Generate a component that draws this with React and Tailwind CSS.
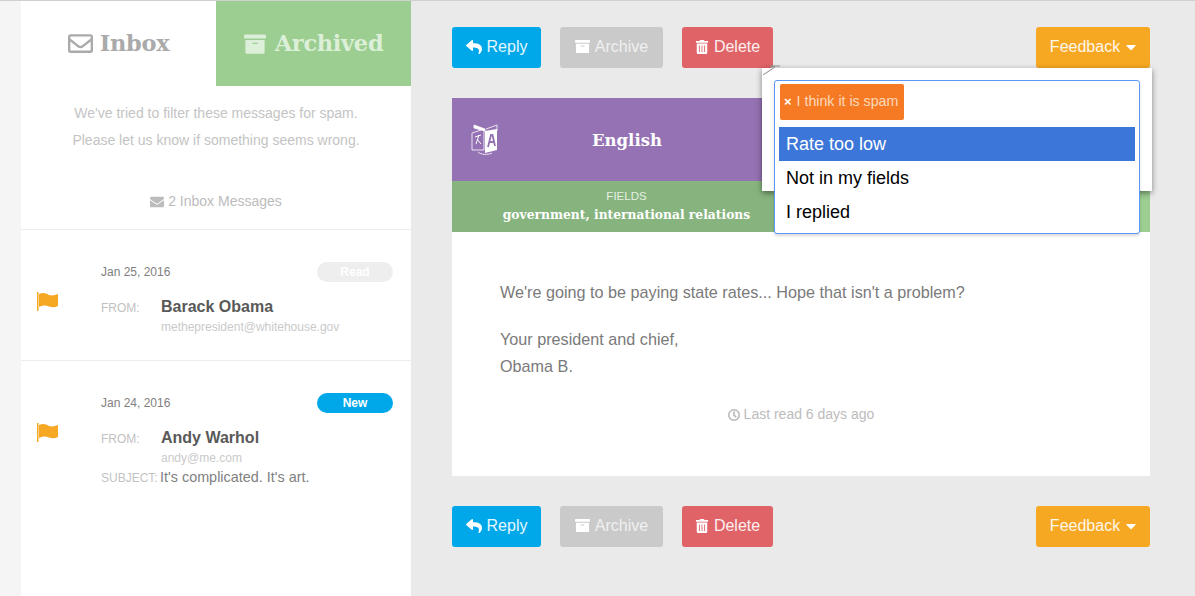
import { FaArchive, FaCaretDown, FaEnvelope, FaRegClock, FaRegEnvelope, FaReply, FaTrashAlt } from "react-icons/fa";

const sans = "font-['Liberation_Sans',Arial,sans-serif]";
const slab = "font-['DejaVu_Serif',serif]";

function TranslateIcon() {
  return (
    <svg width="30" height="32" viewBox="0 0 30 32" fill="none" stroke="#fff" strokeWidth="0.8">
      <path d="M1 9 L13 5 L13 26 L1 26 Z" />
      <path d="M3 1 L14 5 L14 7 L3 4 Z" fill="#fff" />
      <path d="M15 5 L26 1 L26 7" />
      <path d="M14 7 L26 5 L26 26 L14 29 Z" fill="#fff" stroke="none" />
      <path d="M17 23 L20 11 L21.5 11 L24 22 M18.5 18 L23 18" stroke="#9572b3" strokeWidth="1.8" />
      <path d="M4 13 L10 11 M8 11 L5 20 M6 15 L10 20" strokeWidth="1" />
      <path d="M7 28 C10 31 17 31 21 29" />
    </svg>
  );
}

function FlagIcon() {
  return (
    <svg className="mt-[30px] shrink-0" width="21" height="19" viewBox="0 0 21 19" fill="#f7a823">
      <rect x="0" y="0" width="1.5" height="19" />
      <path d="M2 2 C6 0 9 1 12 3 C15 4 18 3 21 2 L21 14 C18 15.5 15 15.5 12 14.5 C9 13 6 13 2 15 Z" />
    </svg>
  );
}

function ActionBar() {
  return (
    <div className="flex text-[16px] text-white/90">
      <button className="flex h-[41px] w-[89px] items-center justify-center gap-[5px] rounded-[3px] bg-[#00a8ea] pb-[2px]">
        <FaReply className="size-[16px] text-white" />
        Reply
      </button>
      <button className="ml-[19px] flex h-[41px] w-[103px] items-center justify-center gap-[5px] rounded-[3px] bg-[#cacaca] pb-[2px] text-[#f0f0f0]">
        <FaArchive className="size-[15px] text-white" />
        Archive
      </button>
      <button className="ml-[19px] flex h-[41px] w-[91px] items-center justify-center gap-[5px] rounded-[3px] bg-[#e06367] pb-[2px]">
        <FaTrashAlt className="size-[14px] text-white" />
        Delete
      </button>
      <button className="ml-auto flex h-[41px] w-[114px] items-center justify-center gap-[3px] rounded-[3px] bg-[#f7a823] pb-[2px] pl-[3px]">
        Feedback
        <FaCaretDown className="size-[16px] text-white" />
      </button>
    </div>
  );
}

function Message({ date, status, statusClass, name, email, subject, divider }) {
  return (
    <div className={`flex h-[131px] pl-[16px] pr-[18px] pt-[32px] ${divider ? "border-b border-[#ececec]" : ""}`}>
      <FlagIcon />
      <div className="ml-[43px] flex-1">
        <div className="flex h-[20px] items-center justify-between">
          <span className="text-[12px] text-[#808080]">{date}</span>
          <span className={`flex h-[20px] w-[76px] items-center justify-center rounded-full text-[12px] font-bold text-white ${statusClass}`}>
            {status}
          </span>
        </div>
        <div className="mt-[13px] flex items-baseline">
          <span className="w-[60px] text-[12px] text-[#c2c2c2]">FROM:</span>
          <span className="text-[16px] font-bold text-[#595959]">{name}</span>
        </div>
        <div className="-mt-[1px] ml-[60px] text-[12px] leading-[18px] text-[#cacaca]">{email}</div>
        {subject && (
          <div className="flex items-baseline">
            <span className="w-[59px] text-[12px] text-[#c2c2c2]">SUBJECT:</span>
            <span className="text-[14.4px] text-[#808080]">{subject}</span>
          </div>
        )}
      </div>
    </div>
  );
}

function FeedbackPopover() {
  return (
    <div className="absolute left-[351px] top-[67px] h-[123px] w-[390px] bg-white shadow-[0_2px_6px_rgba(0,0,0,0.45)]">
      <svg className="absolute -top-[4px] left-0" width="18" height="12" viewBox="0 0 18 12" fill="none">
        <path d="M1 11 L13 3 L8 2 L19 2" stroke="#8a8a8a" strokeWidth="1" />
      </svg>
      <div className="absolute left-[12px] top-[12px] h-[154px] w-[366px] rounded-[3px] border border-[#5b97f7] bg-white shadow-[0_2px_3px_rgba(0,0,0,0.15)]">
        <div className="px-[5px] pt-[3px]">
          <span className="flex h-[36px] w-[124px] items-center gap-[5px] rounded-[2px] bg-[#f67a24] pl-[4px] text-[14.2px] text-[#fbd9bd]">
            <span className="text-[13px] font-bold text-white">×</span>
            I think it is spam
          </span>
        </div>
        <ul className="mx-[4px] mt-[7px] text-[18px]">
          <li className="flex h-[34px] items-center bg-[#3b76d8] px-[7px] text-white">Rate too low</li>
          <li className="flex h-[34px] items-center px-[7px] text-black">Not in my fields</li>
          <li className="flex h-[34px] items-center px-[7px] text-black">I replied</li>
        </ul>
      </div>
    </div>
  );
}

export default function App() {
  return (
    <div className={`flex h-[596px] w-[1195px] overflow-hidden border-t border-[#d0d0d0] bg-[#f5f5f5] ${sans}`}>
      <aside className="ml-[21px] w-[390px] shrink-0 bg-white">
        <div className={`flex h-[85px] text-[22.5px] font-bold ${slab}`}>
          <div className="flex w-[195px] items-center justify-center gap-[7px] text-[#aaa]">
            <FaRegEnvelope className="size-[25px]" />
            <span className="tracking-[-0.3px]">Inbox</span>
          </div>
          <div className="flex w-[195px] items-center justify-center gap-[9px] bg-[#9ccd91] text-[#dcefd8]">
            <FaArchive className="size-[22px]" />
            <span className="tracking-[-0.3px]">Archived</span>
          </div>
        </div>
        <div className="pt-[14px] text-center text-[14px] leading-[27px] text-[#c4c4c4]">
          <p>We've tried to filter these messages for spam.</p>
          <p>Please let us know if something seems wrong.</p>
        </div>
        <div className="flex h-[76px] items-start justify-center gap-[4px] border-b border-[#ececec] pt-[39px] text-[14px] leading-[16px] text-[#bcbcbc]">
          <FaEnvelope className="mt-[2px] size-[14px]" />
          2 Inbox Messages
        </div>
        <Message
          date="Jan 25, 2016"
          status="Read"
          statusClass="bg-[#eeeeee]"
          name="Barack Obama"
          email="methepresident@whitehouse.gov"
          divider
        />
        <Message
          date="Jan 24, 2016"
          status="New"
          statusClass="bg-[#00a8ea]"
          name="Andy Warhol"
          email="andy@me.com"
          subject="It's complicated. It's art."
        />
      </aside>

      <main className="relative flex-1 bg-[#eaeaea] pl-[41px] pr-[45px] pt-[26px]">
        <ActionBar />
        <div className="mt-[30px]">
          <div className="flex">
            <div className="w-1/2">
              <div className="flex h-[83px] items-center bg-[#9572b3] pl-[19px] text-white">
                <TranslateIcon />
                <span className={`ml-[91px] mt-[3px] text-[16.5px] font-bold ${slab}`}>English</span>
              </div>
              <div className="flex h-[51px] flex-col items-center bg-[#87b47e] pt-[7px] text-white">
                <span className="text-[11.5px] leading-[16px] text-[#e4f0e1]">FIELDS</span>
                <span className={`mt-[2px] text-[12.3px] font-bold leading-[18px] ${slab}`}>government, international relations</span>
              </div>
            </div>
            <div className="w-1/2">
              <div className="h-[83px] bg-[#9572b3]" />
              <div className="h-[51px] bg-[#9ccd91]" />
            </div>
          </div>
          <div className="h-[244px] bg-white px-[48px] pt-[47px] text-[16.2px] leading-[27px] text-[#7a7a7a]">
            <p>We're going to be paying state rates... Hope that isn't a problem?</p>
            <p className="mt-[20px]">Your president and chief,</p>
            <p>Obama B.</p>
            <div className="mt-[21px] flex items-center justify-center gap-[4px] text-[14px] leading-[27px] text-[#bcbcbc]">
              <FaRegClock className="size-[12px]" stroke="currentColor" strokeWidth={24} />
              Last read 6 days ago
            </div>
          </div>
        </div>
        <div className="mt-[30px]">
          <ActionBar />
        </div>
        <FeedbackPopover />
      </main>
    </div>
  );
}
